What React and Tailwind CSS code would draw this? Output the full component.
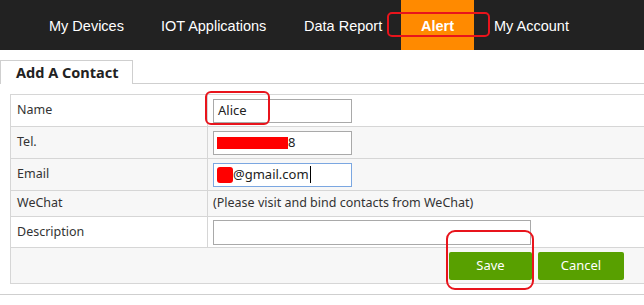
import React from "react";

const Row = ({ label, gray, h, children }) => (
  <div className={`${h} flex border-b border-[#d6d6d6] ${gray ? "bg-[#f7f7f7]" : "bg-white"}`}>
    <div className="w-[197px] shrink-0 border-r border-[#d6d6d6] pl-[6px] flex items-center">
      {label}
    </div>
    <div className="flex-1 pl-[5px] flex items-center">{children}</div>
  </div>
);

const App = () => {
  return (
    <div className="w-[644px] h-[305px] overflow-hidden bg-white relative font-['Noto_Sans',sans-serif] text-[12.5px] text-[#333]">
      {/* top nav */}
      <div className="h-[50px] bg-[#222222] flex items-center pl-[49px] font-['Liberation_Sans',Arial,sans-serif] text-[14.5px] text-white">
        <div className="w-[72px] whitespace-nowrap pt-[3px]">My Devices</div>
        <div className="ml-[40px] w-[103px] whitespace-nowrap pt-[3px]">IOT Applications</div>
        <div className="ml-[40px] w-[77px] whitespace-nowrap pt-[3px]">Data Report</div>
        <div className="ml-[20px] w-[73px] h-full bg-[#ff8a00] flex items-center justify-center font-bold pt-[3px]">
          Alert
        </div>
        <div className="ml-[20px] whitespace-nowrap pt-[3px]">My Account</div>
      </div>

      {/* tab */}
      <div className="mt-[10px] flex items-end border-b border-[#cfcfcf] h-[24px]">
        <div className="w-[133px] h-[24px] border border-b-0 border-[#cfcfcf] bg-white -mb-px pl-[15px] flex items-center font-bold text-[14.5px] text-[#222]">
          Add A Contact
        </div>
      </div>

      {/* form table */}
      <div className="ml-[10px] mt-[10px] w-[660px] border-l border-t border-[#d6d6d6]">
        <Row label="Name" h="h-[32px]">
          <div className="w-[139px] h-[24px] border border-[#a9a9a9] bg-white flex items-center pl-[4px] text-[13px] text-[#222]">
            Alice
          </div>
        </Row>
        <Row label="Tel." gray h="h-[32px]">
          <div className="w-[139px] h-[24px] border border-[#a9a9a9] bg-white flex items-center pl-[3px] text-[13px] text-[#222]">
            <span className="w-[71px] h-[12px] bg-[#ff0000]" />
            <span>8</span>
          </div>
        </Row>
        <Row label="Email" gray h="h-[32px]">
          <div className="w-[139px] h-[24px] border border-[#7ba7e1] bg-white flex items-center pl-[3px] text-[13px] text-[#222]">
            <span className="w-[16px] h-[16px] bg-[#ff0000] rounded-[3px]" />
            <span>@gmail.com</span>
            <span className="w-px h-[17px] bg-black ml-px" />
          </div>
        </Row>
        <Row label="WeChat" gray h="h-[26px]">
          <span className="text-[#333]">(Please visit and bind contacts from WeChat)</span>
        </Row>
        <Row label="Description" h="h-[31px]">
          <div className="w-[318px] h-[25px] border border-[#a9a9a9] bg-white" />
        </Row>
        <div className="h-[36px] bg-[#f7f7f7] border-b border-[#d6d6d6] flex items-center pl-[438px] gap-[6px]">
          <button className="w-[83px] h-[28px] bg-[#58a000] rounded-[2px] text-white text-[13px]">Save</button>
          <button className="w-[86px] h-[28px] bg-[#58a000] rounded-[2px] text-white text-[13px]">Cancel</button>
        </div>
      </div>
      <div className="mt-[10px] border-b border-[#cfcfcf]" />

      {/* red annotations */}
      <div className="absolute left-[387px] top-[12px] w-[103px] h-[25px] border-2 border-[#e8141c] rounded-[5px]" />
      <div className="absolute left-[205px] top-[91px] w-[65px] h-[34px] border-2 border-[#e8141c] rounded-[6px]" />
      <div className="absolute left-[446px] top-[230px] w-[88px] h-[60px] border-2 border-[#e8141c] rounded-[9px]" />
    </div>
  );
};

export default App;
